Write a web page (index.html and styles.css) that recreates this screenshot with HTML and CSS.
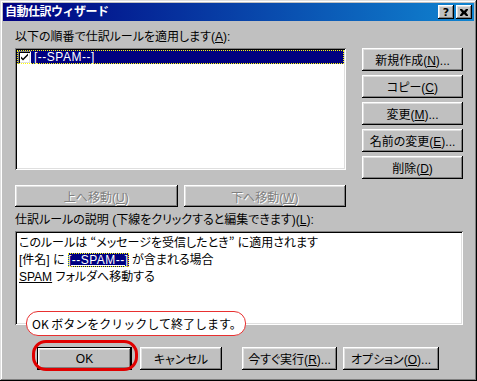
FILE: index.html
```html
<!DOCTYPE html>
<html lang="ja">
<head>
  <meta charset="UTF-8">
  <title>自動仕訳ウィザード</title>
  <link rel="stylesheet" href="styles.css">
</head>
<body>
  <div class="window">
    <div class="titlebar">
      <span class="title">自動仕訳ウィザード</span>
      <span class="tb-btn">?</span>
      <span class="tb-btn close">
        <svg width="8" height="7" viewBox="0 0 8 7"><path d="M0 0h2l2 2 2-2h2v1l-2 2.5 2 2.5v1h-2l-2-2-2 2h-2v-1l2-2.5-2-2.5z" fill="#000"/></svg>
      </span>
    </div>

    <div class="content">
      <div class="label">以下の順番で仕訳ルールを適用します(<u>A</u>):</div>

      <div class="upper">
        <div class="left-col">
          <div class="listbox">
            <div class="row selected">
              <span class="check">
                <svg width="9" height="9" viewBox="0 0 9 9"><path d="M1 3.5l2 2 5-5v2l-5 5-2-2z" fill="#000"/></svg>
              </span>
              <span class="row-text">[--SPAM--]</span>
            </div>
          </div>
          <div class="move-row">
            <button class="btn disabled">上へ移動(<u>U</u>)</button>
            <button class="btn disabled">下へ移動(<u>W</u>)</button>
          </div>
        </div>
        <div class="side-btns">
          <button class="btn">新規作成(<u>N</u>)...</button>
          <button class="btn">コピー(<u>C</u>)</button>
          <button class="btn">変更(<u>M</u>)...</button>
          <button class="btn">名前の変更(<u>E</u>)...</button>
          <button class="btn">削除(<u>D</u>)</button>
        </div>
      </div>

      <div class="label desc-label">仕訳ルールの説明 (下線をクリックすると編集できます)(<u>L</u>):</div>

      <div class="desc">
        <div>このルールは <span class="jq">“メッセージを受信したとき”</span> に適用されます</div>
        <div>[件名] に <span class="hl">[--SPAM--]</span> が含まれる場合</div>
        <div><u>SPAM</u> フォルダへ移動する</div>
      </div>

      <div class="bottom-row">
        <button class="btn default">OK</button>
        <button class="btn cancel">キャンセル</button>
        <button class="btn run">今すぐ実行(<u>R</u>)...</button>
        <button class="btn opt">オプション(<u>O</u>)...</button>
      </div>
    </div>

    <div class="bubble">OK ボタンをクリックして終了します。</div>
    <div class="ring"></div>
  </div>
</body>
</html>
```

FILE: styles.css
```css
* { box-sizing: border-box; margin: 0; padding: 0; }
html, body {
  width: 477px; height: 381px;
  overflow: hidden;
  background: #c0c0c0;
  font-family: "Liberation Sans", "Noto Sans CJK JP", sans-serif;
  font-size: 12px;
  color: #000;
}
u { text-decoration: underline; text-underline-offset: 1px; }

/* window frame (classic raised edge) */
.window {
  position: relative;
  width: 477px;
  height: 381px;
  padding: 3px;
  background: #c0c0c0;
  box-shadow: inset -1px -1px #000, inset 1px 1px #dfdfdf,
              inset -2px -2px #808080, inset 2px 2px #fff;
}

/* title bar */
.titlebar {
  height: 18px;
  display: flex;
  align-items: center;
  gap: 2px;
  padding: 0 2px 0 2px;
  background: linear-gradient(90deg, #000080, #1084d0);
}
.title {
  flex: 1;
  color: #fff;
  font-weight: bold;
  font-size: 12px;
  line-height: 18px;
  letter-spacing: -0.5px;
}
.tb-btn {
  width: 16px;
  height: 14px;
  display: flex;
  align-items: center;
  justify-content: center;
  background: #c0c0c0;
  font: bold 11px "DejaVu Sans", sans-serif;
  box-shadow: inset -1px -1px #000, inset 1px 1px #fff,
              inset -2px -2px #808080, inset 2px 2px #dfdfdf;
}

.content {
  padding: 9px 11px 0 12px;
  display: flex;
  flex-direction: column;
}
.label {
  line-height: 14px;
  height: 14px;
  margin-bottom: 4px;
  white-space: nowrap;
  font-feature-settings: "palt";
}

/* rule list + side buttons */
.upper {
  display: flex;
  gap: 16px;
}
.left-col {
  width: 331px;
  display: flex;
  flex-direction: column;
}
.listbox {
  height: 122px;
  background: #fff;
  padding: 2px;
  box-shadow: inset 1px 1px #808080, inset -1px -1px #fff,
              inset 2px 2px #000, inset -2px -2px #dfdfdf;
}
.row {
  height: 14px;
  display: flex;
  align-items: center;
  gap: 3px;
}
.row.selected {
  background: #000080;
  color: #fff;
  outline: 1px dotted #ff0;
  outline-offset: -1px;
}
.check {
  width: 13px;
  height: 13px;
  margin-left: 1px;
  display: flex;
  align-items: center;
  justify-content: center;
  background: #fff;
  box-shadow: inset 1px 1px #808080, inset -1px -1px #fff,
              inset 2px 2px #000, inset -2px -2px #dfdfdf;
}
.row-text { line-height: 14px; letter-spacing: 0.5px; }

.move-row {
  display: flex;
  gap: 6px;
  margin-top: 15px;
}
.move-row .btn { flex: 1; height: 22px; }

.side-btns {
  width: 101px;
  display: flex;
  flex-direction: column;
  gap: 4px;
}
.side-btns .btn { height: 23px; }

/* classic push button */
.btn {
  border: none;
  background: #c0c0c0;
  font-family: inherit;
  font-size: 12px;
  color: #000;
  font-feature-settings: "palt";
  white-space: nowrap;
  box-shadow: inset -1px -1px #000, inset 1px 1px #fff,
              inset -2px -2px #808080, inset 2px 2px #dfdfdf;
}
.btn.disabled {
  color: #808080;
  text-shadow: 1px 1px #fff;
}

.desc-label { margin-top: 6px; margin-bottom: 4px; }

.desc {
  height: 94px;
  background: #fff;
  padding: 2px 4px;
  line-height: 17px;
  font-feature-settings: "palt";
  box-shadow: inset 1px 1px #808080, inset -1px -1px #fff,
              inset 2px 2px #000, inset -2px -2px #dfdfdf;
}
.jq { font-family: "Noto Sans CJK JP", sans-serif; }
.hl {
  background: #000080;
  color: #fff;
  text-decoration: underline;
  letter-spacing: 0.5px;
  outline: 1px dotted #ff0;
  outline-offset: -1px;
}

/* dialog buttons */
.bottom-row {
  display: flex;
  margin-top: 22px;
  padding-left: 22px;
}
.bottom-row .btn { height: 23px; }
.btn.default {
  width: 95px;
  box-shadow: inset 0 0 0 1px #000,
              inset -2px -2px #000, inset 2px 2px #fff,
              inset -3px -3px #808080, inset 3px 3px #dfdfdf;
}
.btn.cancel { width: 82px; margin-left: 8px; }
.btn.run { width: 95px; margin-left: 20px; }
.btn.opt { width: 96px; margin-left: 6px; }

/* annotations over the dialog */
.bubble {
  position: absolute;
  left: 26px;
  top: 311px;
  width: 220px;
  height: 25px;
  padding-left: 5px;
  line-height: 23px;
  font-family: "Noto Sans CJK JP", sans-serif;
  background: #fff;
  border: 1.5px solid #e83030;
  border-radius: 12px;
  white-space: nowrap;
}
.ring {
  position: absolute;
  left: 32px;
  top: 340px;
  width: 106px;
  height: 31px;
  border: 3px solid #e00000;
  border-radius: 14px;
}
```
